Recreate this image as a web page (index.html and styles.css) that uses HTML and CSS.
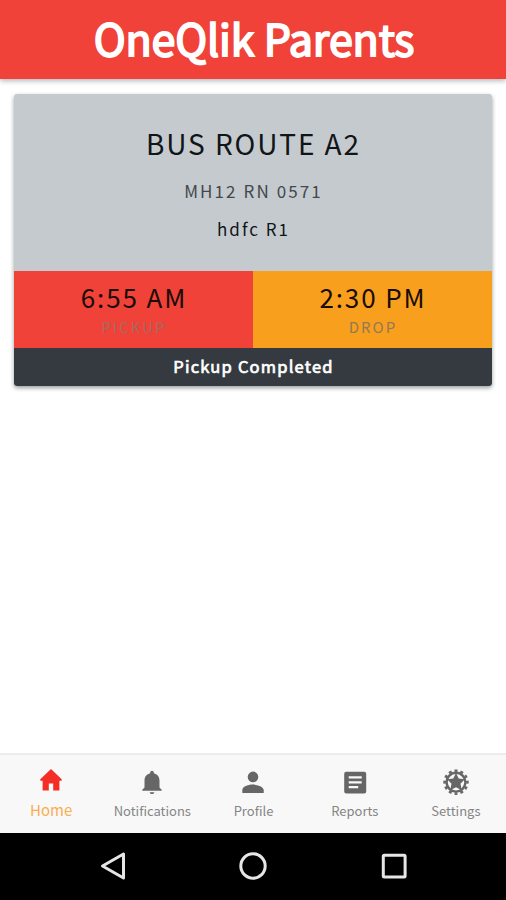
FILE: index.html
```html
<!DOCTYPE html>
<html lang="en">
<head>
<meta charset="utf-8">
<title>OneQlik Parents</title>
<link rel="stylesheet" href="styles.css">
</head>
<body>
<div class="app">
  <header class="header"><h1>OneQlik Parents</h1></header>
  <main class="content">
    <section class="card">
      <div class="route">
        <h2 class="route-name">BUS ROUTE A2</h2>
        <p class="vehicle">MH12 RN 0571</p>
        <p class="stop">hdfc R1</p>
      </div>
      <div class="times">
        <div class="time pickup"><span class="clock">6:55 AM</span><span class="caption">PICKUP</span></div>
        <div class="time drop"><span class="clock">2:30 PM</span><span class="caption">DROP</span></div>
      </div>
      <div class="status">Pickup Completed</div>
    </section>
  </main>
  <nav class="tabs">
    <a class="tab active">
      <svg viewBox="0 0 28 28"><path d="M14 1L3.300 11.200v1.500H5.600v9.800h6.200v-7h4.400v7h6.200v-9.800h2.300v-1.500z"/></svg>
      <span>Home</span>
    </a>
    <a class="tab">
      <svg viewBox="0 0 28 28"><path d="M14 26c1.300 0 2.300-.8 2.300-1.800h-4.600c0 1 1 1.800 2.300 1.800zm7.500-6.500v-7c0-3.700-2.200-6.400-5.700-7.300V4.500a1.800 1.800 0 0 0-3.600 0v.7c-3.500.9-5.700 3.600-5.700 7.300v7l-2.200 2.200v1.100h19.400v-1.100z"/></svg>
      <span>Notifications</span>
    </a>
    <a class="tab">
      <svg viewBox="0 0 28 28"><path d="M14 14.200a5.300 5.300 0 1 0 0-10.600 5.300 5.300 0 0 0 0 10.600zm0 2.400c-3.600 0-10.700 1.800-10.700 5.400v2.900h21.400V22c0-3.600-7.100-5.400-10.700-5.400z"/></svg>
      <span>Profile</span>
    </a>
    <a class="tab">
      <svg viewBox="0 0 28 28"><path fill-rule="evenodd" d="M5.200 3.800h18a2 2 0 0 1 2 2v17.700a2 2 0 0 1-2 2h-18a2 2 0 0 1-2-2V5.800a2 2 0 0 1 2-2zM7.700 8.300v2.200h13V8.300zm0 4.900v2.200h13v-2.200zm0 4.900v2.200h9.500v-2.200z"/></svg>
      <span>Reports</span>
    </a>
    <a class="tab">
      <svg viewBox="0 0 28 28">
        <circle class="cog-teeth" cx="14" cy="14.200" r="11.400" pathLength="96"/>
        <circle class="cog-ring" cx="14" cy="14.200" r="9.400"/>
        <path d="M14 5l2.700 5.600 6.100.7-4.300 4.400 1.300 6.500-5.800-3-5.800 3 1.300-6.500-4.300-4.400 6.100-.7z"/>
      </svg>
      <span>Settings</span>
    </a>
  </nav>
  <footer class="system">
    <svg viewBox="0 0 32 32"><path d="M27.500 4v24L6.500 16z"/></svg>
    <svg viewBox="0 0 32 32"><circle cx="16" cy="16" r="12.200"/></svg>
    <svg viewBox="0 0 32 32"><rect x="5.300" y="5.300" width="21.800" height="21.800" rx="1"/></svg>
  </footer>
</div>
</body>
</html>
```
FILE: styles.css
```css
* { box-sizing: border-box; }
body {
  margin: 0;
  background: #fff;
  font-family: "Noto Sans CJK SC", "Noto Sans", sans-serif;
}
h1, h2, p { margin: 0; font-weight: 400; }
.app { display: flex; flex-direction: column; height: 900px; overflow: hidden; }
.header {
  height: 79px;
  background: #f04239;
  box-shadow: 0 2px 5px rgba(0, 20, 30, .3);
  text-align: center;
  color: #fff;
}
.header h1 {
  padding-left: 2px;
  font-size: 43px;
  line-height: 75px;
  letter-spacing: -.15px;
  -webkit-text-stroke: 1.800px #fff;
}
.content { flex: 1; padding: 15px 14px; }
.card {
  border-radius: 3px;
  overflow: hidden;
  box-shadow: 0 2px 4px rgba(0, 10, 20, .4);
  text-align: center;
}
.route { height: 177px; padding-top: 28px; padding-left: 1px; background: #c5cacf; color: #111517; }
.route-name { font-size: 28px; line-height: 42px; letter-spacing: 1.900px; }
.vehicle { margin-top: 13px; font-size: 17px; line-height: 28px; letter-spacing: 2.100px; color: #42484c; }
.stop { margin-top: 10px; font-size: 17px; line-height: 28px; letter-spacing: 2px; }
.times { display: grid; grid-template-columns: 1fr 1fr; height: 77px; }
.time { display: flex; flex-direction: column; padding: 7px 0 0 1px; }
.pickup { background: #f04239; }
.drop { background: #f8a01d; }
.clock { font-size: 26px; line-height: 38px; letter-spacing: 1.900px; color: #190c08; }
.caption { margin-top: 1px; font-size: 15px; line-height: 20px; letter-spacing: 2px; color: #957855; }
.pickup .caption { color: #a8685c; }
.status {
  height: 38px;
  padding-left: 1px;
  background: #343a40;
  color: #fff;
  font-size: 16.500px;
  line-height: 37px;
  letter-spacing: 1.200px;
  -webkit-text-stroke: .7px #fff;
}
.tabs {
  display: grid;
  grid-template-columns: repeat(5, 1fr);
  height: 80px;
  background: #f8f8f8;
  border-top: 2px solid #ececec;
}
.tab { display: flex; flex-direction: column; align-items: center; padding: 13px 0 0 1px; color: #858585; }
.tab svg { width: 28px; height: 28px; fill: #666; }
.tab span { margin-top: 5px; font-size: 13px; line-height: 20px; }
.tab.active { color: #f9ad50; }
.tab.active svg { fill: #f32e27; }
.tab.active span { margin-top: 4px; font-size: 15px; }
.cog-teeth { fill: none; stroke: #666; stroke-width: 2.600; stroke-dasharray: 4 4; stroke-dashoffset: 2; }
.cog-ring { fill: none; stroke: #666; stroke-width: 2.400; }
.system {
  display: flex;
  justify-content: center;
  gap: 109px;
  height: 67px;
  padding-top: 17px;
  background: #000;
}
.system svg { width: 32px; height: 32px; fill: none; stroke: #e6e6e6; stroke-width: 3; stroke-linejoin: round; }
```
